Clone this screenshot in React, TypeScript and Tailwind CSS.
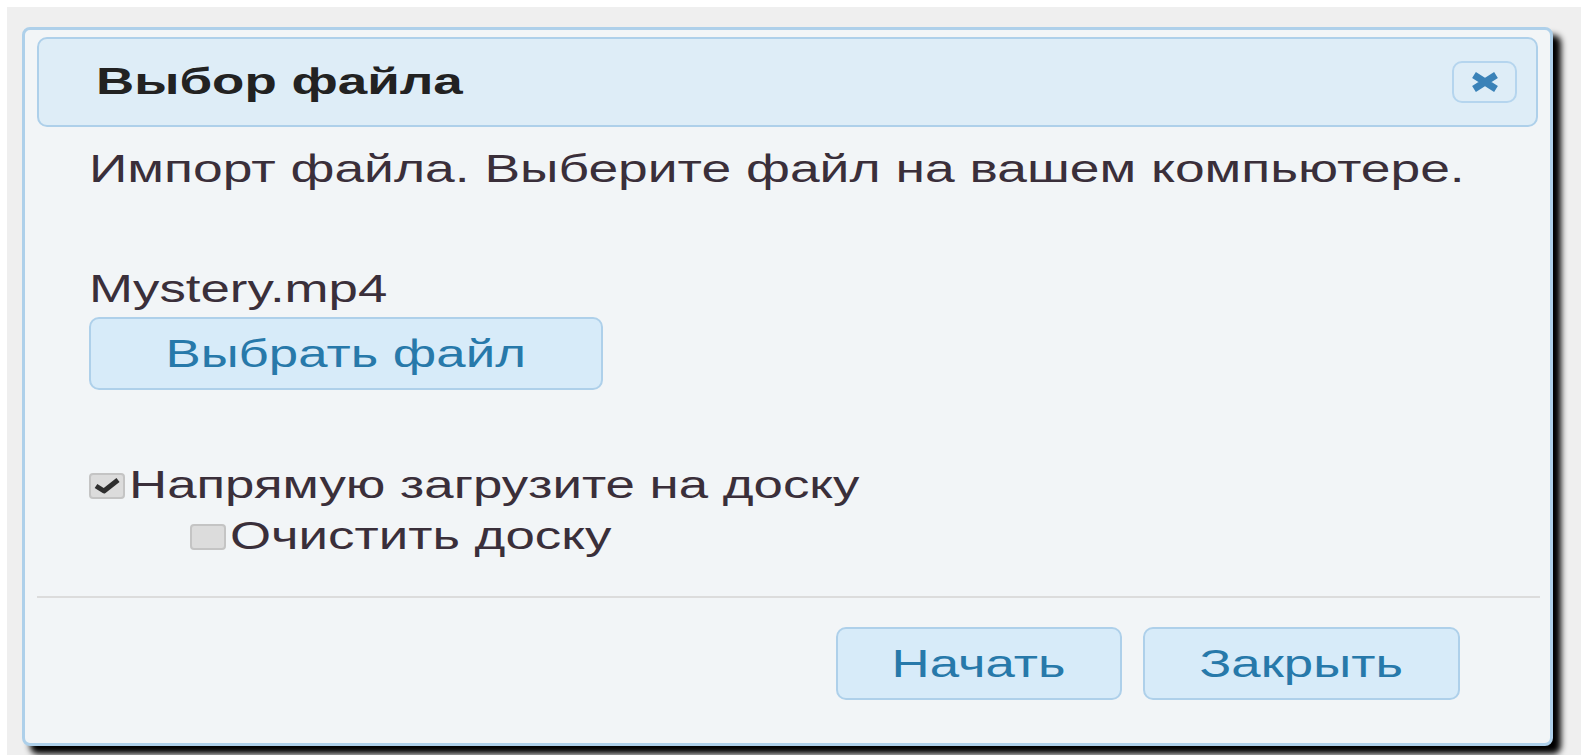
import React from "react";

const font = { fontFamily: '"Liberation Sans", Arial, sans-serif' };

function Wide({ children, className = "" }: { children: React.ReactNode; className?: string }) {
  return <span className={"inline-block whitespace-nowrap origin-left scale-x-[1.39] " + className}>{children}</span>;
}

function Box({ checked }: { checked?: boolean }) {
  return (
    <span className="flex h-[26px] w-[36px] shrink-0 items-center justify-center rounded-[4px] border-2 border-[#c4c4c4] bg-[#dcdcdc]">
      {checked && (
        <svg width="28" height="18" viewBox="0 0 28 18">
          <path d="M3 9 L11 14 L25 3" fill="none" stroke="#2e2e2e" strokeWidth="5" strokeLinejoin="round" />
        </svg>
      )}
    </span>
  );
}

function Btn({ label, w }: { label: string; w: string }) {
  return (
    <button
      className={
        "flex h-[73px] items-center justify-center rounded-[10px] border-2 border-[#aed0ea] bg-[#d7ebf9] text-[38px] leading-[44px] text-[#2779aa] " +
        w
      }
    >
      <span className="inline-block whitespace-nowrap scale-x-[1.39]">{label}</span>
    </button>
  );
}

export default function App() {
  return (
    <div className="h-[755px] w-[1581px] overflow-hidden bg-white pl-[7px] pt-[7px]" style={font}>
      <div className="h-[748px] bg-[#efefef] pl-[15px] pt-[20px]">
        <div className="flex h-[719px] w-[1531px] flex-col rounded-[8px] border-[3px] border-[#aed0ea] bg-[#f2f5f7] px-[12px] pt-[7px] shadow-[8px_8px_6px_#000]">
          {/* title bar */}
          <div className="flex h-[90px] items-center justify-between rounded-[10px] border-2 border-[#aed0ea] bg-[#deedf7] pl-[57px] pr-[19px]">
            <span className="inline-block origin-left scale-x-[1.47] text-[36px] font-bold leading-[44px] text-[#222]">
              Выбор файла
            </span>
            <button className="flex h-[42px] w-[65px] items-center justify-center rounded-[10px] border-2 border-[#b5d5ee] bg-[#deedf7]">
              <svg width="32" height="22" viewBox="0 0 32 22">
                <path d="M5 4 L27 18 M5 18 L27 4" stroke="#3a82b8" strokeWidth="7" strokeLinecap="butt" />
              </svg>
            </button>
          </div>

          {/* body */}
          <div className="pl-[52px] text-[38px] text-[#3a2f3a]">
            <p className="mt-[20px] leading-[44px]">
              <Wide className="scale-x-[1.405]">Импорт файла. Выберите файл на вашем компьютере.</Wide>
            </p>
            <p className="mt-[76px] leading-[44px]">
              <Wide>Mystery.mp4</Wide>
            </p>
            <div className="mt-[6px]">
              <Btn label="Выбрать файл" w="w-[514px] h-[72px]" />
            </div>
            <div className="mt-[70px] flex h-[51px] items-center leading-[51px]">
              <Box checked />
              <span className="ml-[4px]">
                <Wide>Напрямую загрузите на доску</Wide>
              </span>
            </div>
            <div className="flex h-[51px] items-center pl-[101px] leading-[51px]">
              <Box />
              <span className="ml-[4px]">
                <Wide>Очистить доску</Wide>
              </span>
            </div>
          </div>

          <div className="mr-[-2px] mt-[34px] h-[2px] bg-[#dcdcdc]" />

          {/* buttons */}
          <div className="mt-[29px] flex justify-end gap-[21px] pr-[78px]">
            <Btn label="Начать" w="w-[286px]" />
            <Btn label="Закрыть" w="w-[317px]" />
          </div>
        </div>
      </div>
    </div>
  );
}
